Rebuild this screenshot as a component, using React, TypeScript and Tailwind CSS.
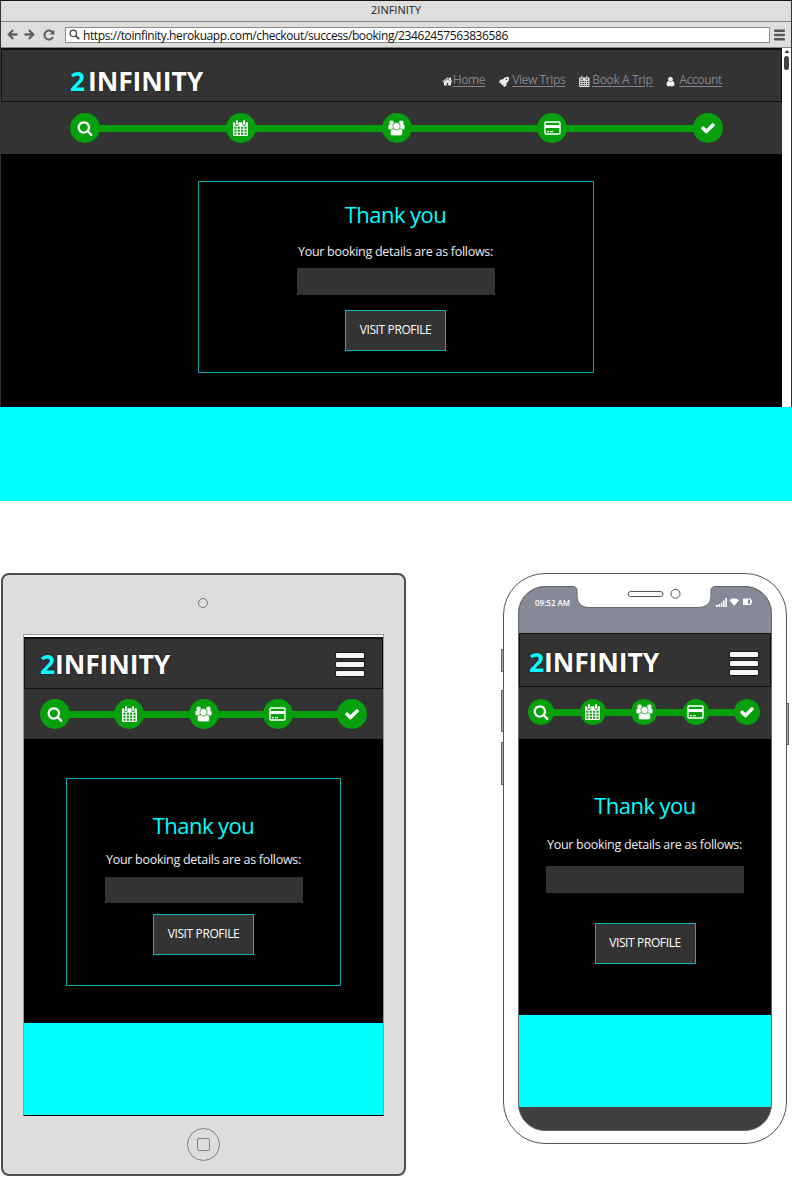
import React from "react";
import { FaRocket, FaArrowLeft, FaArrowRight } from "react-icons/fa";

const SEARCH =
  "M1216 832q0-185-131.5-316.5t-316.5-131.5-316.5 131.5-131.5 316.5 131.5 316.5 316.5 131.5 316.5-131.5 131.5-316.5zm512 832q0 52-38 90t-90 38q-54 0-90-38l-343-342q-179 124-399 124-143 0-273.5-55.5t-225-150-150-225-55.5-273.5 55.5-273.5 150-225 225-150 273.5-55.5 273.5 55.5 225 150 150 225 55.5 273.5q0 220-124 399l343 343q37 37 37 90z";
const CHECK =
  "M1671 566q0 40-28 68l-724 724-136 136q-28 28-68 28t-68-28l-136-136-362-362q-28-28-28-68t28-68l136-136q28-28 68-28t68 28l294 295 656-657q28-28 68-28t68 28l136 136q28 28 28 68z";
const HOME =
  "M1472 992v480q0 26-19 45t-45 19h-384v-384h-256v384h-384q-26 0-45-19t-19-45v-480q0-1 .5-3t.5-3l575-474 575 474q1 2 1 6zm223-69l-62 74q-8 9-21 11h-3q-13 0-21-7l-692-577-692 577q-12 8-24 7-13-2-21-11l-62-74q-8-10-7-23.5t11-21.5l719-599q32-26 76-26t76 26l244 204v-195q0-14 9-23t23-9h192q14 0 23 9t9 23v408l219 182q10 8 11 21.5t-7 23.5z";
const USER =
  "M1536 1399q0 109-62.5 187t-150.5 78h-854q-88 0-150.5-78t-62.5-187q0-85 8.5-160.5t31.5-152 58.5-131 94-89 134.5-34.5q131 128 313 128t313-128q76 0 134.5 34.5t94 89 58.5 131 31.5 152 8.5 160.5zm-256-887q0 159-112.5 271.5t-271.5 112.5-271.5-112.5-112.5-271.5 112.5-271.5 271.5-112.5 271.5 112.5 112.5 271.5z";

function Glyph({ d, className }: { d: string; className: string }) {
  return (
    <svg viewBox="0 0 1792 1792" className={`shrink-0 fill-current ${className}`}>
      <path d={d} />
    </svg>
  );
}

function Calendar({ className }: { className: string }) {
  return (
    <svg viewBox="0 0 15 16" className={`shrink-0 ${className}`}>
      <path
        fill="currentColor"
        fillRule="evenodd"
        d="M1 2.200H2.200V4.300a1.700 1.700 0 0 0 3.400 0V2.200H9.400V4.300a1.700 1.700 0 0 0 3.400 0V2.200H14a1 1 0 0 1 1 1V15a1 1 0 0 1-1 1H1a1 1 0 0 1-1-1V3.200a1 1 0 0 1 1-1zM1.400 6.800V8.700H3.500V6.800zM4.800 6.800V8.700H6.900V6.800zM8.100 6.800V8.700H10.200V6.800zM11.500 6.800V8.700H13.600V6.800zM1.400 9.800V11.700H3.500V9.800zM4.800 9.800V11.700H6.900V9.800zM8.100 9.800V11.700H10.200V9.800zM11.500 9.800V11.700H13.600V9.800zM1.400 12.800V14.700H3.500V12.800zM4.800 12.800V14.700H6.900V12.800zM8.100 12.800V14.700H10.200V12.800zM11.500 12.800V14.700H13.600V12.800z"
      />
      <rect x="3" y="0" width="1.900" height="5" rx=".9" fill="currentColor" />
      <rect x="10.200" y="0" width="1.900" height="5" rx=".9" fill="currentColor" />
    </svg>
  );
}

function Users() {
  return (
    <svg viewBox="0 0 17 16" className="h-4 w-[17px] shrink-0" fill="currentColor">
      <circle cx="3.600" cy="2.700" r="2.300" />
      <circle cx="13.400" cy="2.700" r="2.300" />
      <rect x=".4" y="4.600" width="5.400" height="4.800" rx="1.500" />
      <rect x="11.200" y="4.600" width="5.400" height="4.800" rx="1.500" />
      <g stroke="#05a00c" strokeWidth=".7">
        <rect x="2.400" y="8.600" width="12.200" height="7.200" rx="2.600" />
        <circle cx="8.500" cy="6.200" r="3.700" />
      </g>
    </svg>
  );
}

function Card() {
  return (
    <svg viewBox="0 0 17 14" className="h-[14px] w-[17px]">
      <rect x="1" y="1" width="15" height="12" rx="1" fill="none" stroke="currentColor" strokeWidth="1.400" />
      <path d="M1 4h15v3H1zM3 10h2v1.200H3zM6 10h3v1.200H6z" fill="currentColor" />
    </svg>
  );
}

function Steps({ small = false }: { small?: boolean }) {
  const icons = [
    <Glyph key="s" d={SEARCH} className="h-4 w-4" />,
    <Calendar key="c" className="h-4 w-[15px]" />,
    <Users key="u" />,
    <Card key="p" />,
    <Glyph key="k" d={CHECK} className="h-4 w-4" />,
  ];
  return (
    <div className="flex w-full items-center text-white">
      {icons.map((icon, i) => (
        <React.Fragment key={i}>
          {i > 0 && <div className="-mx-px h-[7px] flex-1 bg-[#05a00c]" />}
          <div
            className={`flex shrink-0 items-center justify-center rounded-full bg-[#05a00c] ${
              small ? "h-[26px] w-[26px]" : "h-[30px] w-[30px]"
            }`}
          >
            {icon}
          </div>
        </React.Fragment>
      ))}
    </div>
  );
}

function Logo({ gap = false }: { gap?: boolean }) {
  return (
    <div className="flex text-[26.5px] leading-8 font-bold tracking-[-0.1px] whitespace-nowrap text-white [text-shadow:0_0_2px_#111]">
      <span className={gap ? "mr-[3px] text-[#00ffff]" : "text-[#00ffff]"}>2</span>
      <span>INFINITY</span>
    </div>
  );
}

function Menu() {
  return (
    <div className="flex w-7 flex-col gap-1">
      {[0, 1, 2].map((i) => (
        <div key={i} className="h-[5px] rounded-[1px] bg-[#f5f5f5] shadow-[0_0_0_1px_#1e1e1e]" />
      ))}
    </div>
  );
}

function Heading() {
  return (
    <h1 className="h-8 text-[22px] leading-8 tracking-[-0.55px] whitespace-nowrap text-[#00ffff]">Thank you</h1>
  );
}
function Intro() {
  return (
    <p className="h-5 text-[12.5px] leading-5 tracking-[-0.28px] whitespace-nowrap text-[#eeeeee]">
      Your booking details are as follows:
    </p>
  );
}
function Visit() {
  return (
    <button className="h-[41px] w-[101px] border border-[#0bb3b3] bg-[#333333] pb-0.5 text-[12px] font-medium tracking-[-0.38px] whitespace-nowrap text-white">
      VISIT PROFILE
    </button>
  );
}

function NavLink({ icon, label, slot = "w-[13px]" }: { icon: React.ReactNode; label: string; slot?: string }) {
  return (
    <a className="flex items-center text-[#85828e]">
      <span className={`flex pt-[3px] text-[#eeeeee] ${slot}`}>{icon}</span>
      <span className="underline underline-offset-2">{label}</span>
    </a>
  );
}

function Browser() {
  return (
    <section className="flex h-[501px] w-[792px] flex-col">
      <div className="flex h-[407px] flex-col border-t border-r border-l border-[#333333] border-t-[#191516]">
        <div className="flex h-[21px] items-center justify-center border-b border-[#858585] bg-[#dededc] pb-0.5 text-[11px] text-[#222222]">
          2INFINITY
        </div>
        <div className="flex h-[26px] items-center border-b border-[#888888] bg-[#dededc] text-[#5c5c5c]">
          <FaArrowLeft className="ml-1.5 h-[11px] w-[11px] stroke-current stroke-[30]" />
          <FaArrowRight className="ml-[6px] h-[11px] w-[11px] stroke-current stroke-[30]" />
          <svg viewBox="0 0 12 12" className="ml-2 h-3 w-3">
            <path d="M9.300 3A4.500 4.500 0 1 0 10 8" fill="none" stroke="currentColor" strokeWidth="2" />
            <path d="M11.300.7V5.600H6.400z" fill="currentColor" />
          </svg>
          <div className="ml-[10px] flex h-4 w-[705px] items-center border border-[#8d8d8d] bg-white pl-[3px] text-[12px] tracking-[-0.4px] whitespace-nowrap text-[#111111]">
            <svg viewBox="0 0 12 12" className="mr-[3px] h-[11px] w-[11px] text-[#444444]">
              <circle cx="4.700" cy="4.700" r="3.500" fill="none" stroke="currentColor" strokeWidth="1.400" />
              <path d="m7.500 7.500 3.600 3.600" stroke="currentColor" strokeWidth="1.800" />
            </svg>
            <span className="pt-[3px]">
              https://toinfinity.herokuapp.com/checkout/success/booking/23462457563836586
            </span>
          </div>
          <svg viewBox="0 0 11 12" className="ml-[4px] h-3 w-[11px] fill-[#555555]">
            <rect y=".5" width="11" height="2.500" rx="1" />
            <rect y="4.800" width="11" height="2.500" rx="1" />
            <rect y="9" width="11" height="2.500" rx="1" />
          </svg>
        </div>
        <div className="flex flex-1">
          <div className="flex w-[781px] flex-col bg-black">
            <header className="flex h-[54px] items-center justify-between border border-t-2 border-[#111111] bg-[#333333] pr-[59px] pl-[68px]">
              <div className="pt-[11px]">
                <Logo gap />
              </div>
              <nav className="flex gap-[14px] pt-[9px] text-[12px] leading-5 tracking-[-0.38px] whitespace-nowrap">
                <NavLink slot="w-[11px]" icon={<Glyph d={HOME} className="h-[11px] w-[11px]" />} label="Home" />
                <NavLink icon={<FaRocket className="h-[10px] w-[10px]" />} label="View Trips" />
                <NavLink icon={<Calendar className="h-[11px] w-[10.5px]" />} label="Book A Trip" />
                <NavLink icon={<Glyph d={USER} className="-ml-px h-[11px] w-[11px]" />} label="Account" />
              </nav>
            </header>
            <div className="flex h-[52px] items-center bg-[#333333] pr-[59px] pl-[69px]">
              <Steps />
            </div>
            <div className="mt-[27px] ml-[197px] flex h-[192px] w-[396px] flex-col items-center border border-[#0ba9ab] pt-[16px] pr-px">
              <Heading />
              <div className="mt-[12px]">
                <Intro />
              </div>
              <div className="mt-[6px] h-[27px] w-[198px] bg-[#333333]" />
              <div className="mt-[15px]">
                <Visit />
              </div>
            </div>
          </div>
          <div className="flex w-[9px] flex-col items-center bg-white pt-[2px]">
            <svg viewBox="0 0 6 4" className="h-1 w-1.5">
              <path d="M3 0 5.500 3h-5z" fill="#333333" />
            </svg>
            <div className="mt-[2px] h-[14px] w-[5px] rounded-full bg-[#444444]" />
          </div>
        </div>
      </div>
      <div className="flex-1 bg-[#00ffff]" />
    </section>
  );
}

function Tablet() {
  return (
    <section className="ml-px flex h-[603px] w-[405px] flex-col items-center rounded-[8px] border-2 border-[#4e4e4e] bg-[#dddddd] pr-px">
      <div className="mt-[23px] h-[10px] w-[10px] rounded-full border border-[#777777]" />
      <div className="mt-[26px] ml-px flex h-[482px] w-[361px] flex-col border border-[#999999] border-b-black bg-white pt-[2px]">
        <header className="flex h-[52px] items-center justify-between border border-t-2 border-[#111111] bg-[#333333] pr-[18px] pl-[15px]">
          <div className="pt-[1px]">
            <Logo />
          </div>
          <div className="pt-[2px]">
            <Menu />
          </div>
        </header>
        <div className="flex h-[50px] items-center bg-[#333333] px-4">
          <Steps />
        </div>
        <div className="flex h-[284px] justify-center bg-black pt-[39px]">
          <div className="flex h-[208px] w-[275px] flex-col items-center border border-[#0ba9ab] pt-[30px]">
            <Heading />
            <div className="mt-[9px]">
              <Intro />
            </div>
            <div className="mt-[7px] h-[26px] w-[198px] bg-[#333333]" />
            <div className="mt-[11px]">
              <Visit />
            </div>
          </div>
        </div>
        <div className="flex-1 bg-[#00ffff]" />
      </div>
      <div className="mt-3 flex h-[33px] w-[33px] items-center justify-center rounded-full border border-[#808080]">
        <div className="h-[13px] w-[13px] rounded-[2px] border border-[#808080]" />
      </div>
    </section>
  );
}

function SideButton({ className }: { className: string }) {
  return <div className={`w-[3px] border border-[#666666] bg-[#aaaaaa] ${className}`} />;
}

function Phone() {
  return (
    <div className="flex">
      <div className="-mr-px flex flex-col pt-[76px]">
        <SideButton className="h-[23px]" />
        <SideButton className="mt-[18px] h-[42px]" />
        <SideButton className="mt-[10px] h-[43px]" />
      </div>
      <section className="relative flex h-[571px] w-[284px] flex-col rounded-[42px] border border-[#555555] bg-white px-[14px] pt-3">
        <div className="flex h-[545px] flex-col overflow-hidden rounded-[27px] border border-[#666666] bg-[#404040]">
          <div className="flex h-[46px] items-start justify-between bg-[#868a98] pt-2 pr-[17px] pl-4 text-[8px] leading-4 font-semibold whitespace-nowrap text-white">
            <span>09:52 AM</span>
            <svg viewBox="0 0 38 10" className="mt-[2px] h-[10px] w-[38px] fill-white">
              <path d="M0 8h2v2H0zM2.500 7h1.500v3H2.500zM4.800 5.500h1.500V10H4.800zM7 3.500h1.600V10H7zM9.300 1H11v9H9.300z" />
              <path d="M13.500 3.300Q18.200-.8 23 3.300L18.200 8.800z" />
              <path fillRule="evenodd" d="M27 1.500h8v1.700h1v3h-1V8h-8zm5 1v4.500h2V2.500z" />
            </svg>
          </div>
          <header className="flex h-[54px] items-center justify-between border border-[#111111] bg-[#333333] pr-3 pl-[9px]">
            <div className="pt-[4px]">
              <Logo />
            </div>
            <div className="pt-[6px]">
              <Menu />
            </div>
          </header>
          <div className="flex h-[52px] items-center bg-[#333333] pr-[11px] pb-[2px] pl-[9px]">
            <Steps small />
          </div>
          <div className="flex h-[276px] flex-col items-center bg-black pt-[50px]">
            <Heading />
            <div className="mt-[14px] pr-px">
              <Intro />
            </div>
            <div className="mt-[11px] h-[27px] w-[198px] bg-[#333333]" />
            <div className="mt-[30px]">
              <Visit />
            </div>
          </div>
          <div className="h-[92px] bg-[#00ffff]" />
        </div>
        <svg viewBox="0 0 144 23" className="absolute top-[12px] left-[68px] h-[23px] w-[144px]">
          <path d="M0 0.500Q5 .5 5 4V11Q6 21.500 17 21.500H126Q138 21.500 139 11V4Q139 .5 144 .5V-2H0z" fill="white" />
          <path
            d="M0 0.500Q5 .5 5 4V11Q6 21.500 17 21.500H126Q138 21.500 139 11V4Q139 .5 144 .5"
            fill="none"
            stroke="#666666"
          />
          <rect x="56" y="5.500" width="35" height="5" rx="2.500" fill="none" stroke="#555555" />
          <circle cx="103.500" cy="7.800" r="4.500" fill="none" stroke="#555555" />
        </svg>
      </section>
      <SideButton className="-ml-px mt-[130px] h-[42px]" />
    </div>
  );
}

export default function App() {
  return (
    <main className="h-[1177px] w-[792px] overflow-hidden bg-white font-['Open_Sans','Noto_Sans',sans-serif]">
      <Browser />
      <div className="mt-[72px] flex items-start justify-between pr-[3px]">
        <Tablet />
        <Phone />
      </div>
    </main>
  );
}
